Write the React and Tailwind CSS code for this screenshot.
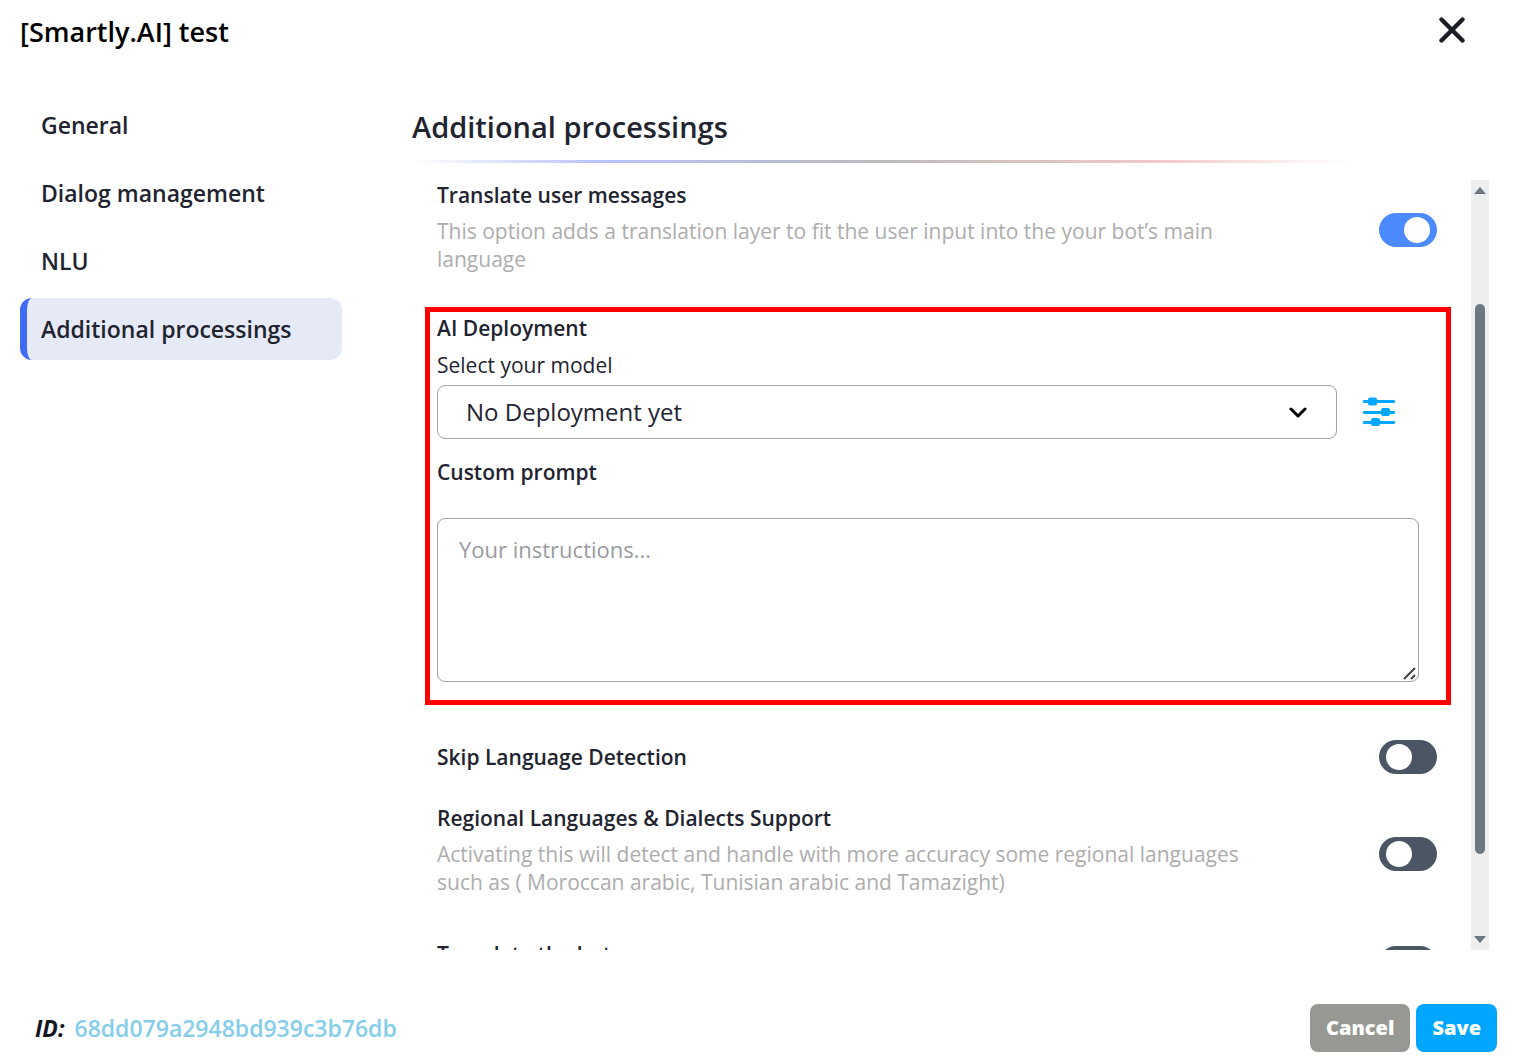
import { useState } from 'react';

const tabs = ['General', 'Dialog management', 'NLU', 'Additional processings'];

function Toggle({ id, checked, onChange, className = '' }) {
  return (
    <input
      id={id}
      type="checkbox"
      checked={checked}
      onChange={(e) => onChange(e.target.checked)}
      className={`flex h-[34px] w-[58px] shrink-0 cursor-pointer appearance-none items-center rounded-full bg-[#4b5563] px-[7px] before:block before:size-[26px] before:rounded-full before:bg-white checked:justify-end checked:bg-[#4b8bff] ${className}`}
    />
  );
}

function OptionRow({ id, title, description, checked, onChange, toggleClass, className = '' }) {
  return (
    <div className={`flex justify-between pr-[14px] pl-3 ${className}`}>
      <div className="max-w-[830px]">
        <label htmlFor={id} className="block text-[21px] leading-7 font-semibold">
          {title}
        </label>
        {description && <p className="mt-2 text-[21px] leading-7 text-[#adadad]">{description}</p>}
      </div>
      <Toggle id={id} checked={checked} onChange={onChange} className={toggleClass} />
    </div>
  );
}

function SlidersIcon() {
  return (
    <svg width="32" height="30" viewBox="0 0 32 30" fill="#00a6ff" aria-hidden="true">
      <rect x="0" y="3" width="32" height="3" rx="1" />
      <rect x="0" y="14" width="32" height="3" rx="1" />
      <rect x="0" y="24" width="32" height="3" rx="1" />
      <rect x="5" y="0.5" width="9" height="8" rx="2" />
      <rect x="18" y="11" width="9" height="8" rx="2" />
      <rect x="8" y="21" width="9" height="8" rx="2" />
    </svg>
  );
}

function ScrollBar() {
  return (
    <div className="flex w-[18px] shrink-0 flex-col items-center bg-[#eeeeee] py-[7px]" aria-hidden="true">
      <svg width="12" height="7" viewBox="0 0 12 7" fill="#6b7880">
        <path d="M6 0 12 7H0Z" />
      </svg>
      <div className="flex w-full flex-1 flex-col items-center">
        <div className="grow-[110]" />
        <div className="w-[10px] grow-[550] rounded-full bg-[#6b7880]" />
        <div className="grow-[82]" />
      </div>
      <svg width="12" height="7" viewBox="0 0 12 7" fill="#6b7880">
        <path d="M6 7 12 0H0Z" />
      </svg>
    </div>
  );
}

export default function App() {
  const [activeTab, setActiveTab] = useState('Additional processings');
  const [options, setOptions] = useState({
    translateUser: true,
    skipDetection: false,
    regional: false,
    translateBot: false,
  });
  const [model, setModel] = useState('none');
  const [prompt, setPrompt] = useState('');

  const setOption = (key) => (value) => setOptions((prev) => ({ ...prev, [key]: value }));

  return (
    <div className="flex h-screen flex-col bg-white font-['Open_Sans',sans-serif] text-[#1f2430]">
      <header className="flex h-[60px] shrink-0 items-center justify-between pr-[50px] pl-5">
        <h1 className="pt-1 text-[27px] leading-8 font-semibold text-black">[Smartly.AI] test</h1>
        <button type="button" aria-label="Close" className="cursor-pointer">
          <svg width="26" height="26" viewBox="0 0 26 26" fill="none" stroke="#1a1d26" strokeWidth="4.4" strokeLinecap="round">
            <path d="M2.5 2.5 23.5 23.5M23.5 2.5 2.5 23.5" />
          </svg>
        </button>
      </header>

      <div className="flex min-h-0 flex-1 pr-[26px] pl-5">
        <nav className="mt-[34px] flex w-[322px] shrink-0 flex-col gap-[6px]">
          {tabs.map((tab) => (
            <button
              key={tab}
              type="button"
              onClick={() => setActiveTab(tab)}
              className={`h-[62px] cursor-pointer rounded-xl border-l-[7px] pl-[14px] text-left text-[23px] leading-8 font-semibold ${
                tab === activeTab ? 'border-[#3f6af5] bg-[#e6eaf6]' : 'border-transparent'
              }`}
            >
              {tab}
            </button>
          ))}
        </nav>

        <main className="ml-[70px] flex min-w-0 flex-1 flex-col">
          <h2 className="mt-[47px] text-[29px] leading-10 font-semibold">Additional processings</h2>
          <div className="mt-[13px] mr-[139px] h-[3px] shrink-0 bg-[linear-gradient(90deg,transparent,#b9c2fa_20%,#bbbbbb_50%,#f3c9c9_80%,transparent)]" />

          <div className="mt-[17px] flex min-h-0 flex-1">
            <div className="min-w-0 flex-1 overflow-hidden pr-5 pl-[13px]">
              <OptionRow
                id="translate-user"
                title="Translate user messages"
                description="This option adds a translation layer to fit the user input into the your bot’s main language"
                checked={options.translateUser}
                onChange={setOption('translateUser')}
                toggleClass="mt-8"
                className="items-start pt-px"
              />

              <section className="mt-[34px] border-[5px] border-[#ff0000] pt-[2px] pr-[27px] pb-[18px] pl-[7px]">
                <h3 className="text-[21px] leading-7 font-semibold">AI Deployment</h3>
                <label htmlFor="model" className="mt-[9px] block text-[21px] leading-7">
                  Select your model
                </label>
                <div className="mt-[6px] flex items-center pr-6">
                  <div className="relative flex-1">
                    <select
                      id="model"
                      value={model}
                      onChange={(e) => setModel(e.target.value)}
                      className="block h-[54px] w-full appearance-none rounded-lg border border-[#a3a3a9] bg-white pl-7 text-[24px]"
                    >
                      <option value="none">No Deployment yet</option>
                    </select>
                    <svg className="pointer-events-none absolute top-[22px] right-[30px]" width="18" height="12" viewBox="0 0 18 12" fill="none" stroke="#000" strokeWidth="3" strokeLinecap="round" strokeLinejoin="round">
                      <path d="m2 2 7 7 7-7" />
                    </svg>
                  </div>
                  <button type="button" aria-label="Model settings" className="ml-[26px] cursor-pointer">
                    <SlidersIcon />
                  </button>
                </div>

                <label htmlFor="prompt" className="mt-[19px] block text-[21px] leading-7 font-semibold">
                  Custom prompt
                </label>
                <div className="relative mt-8">
                  <textarea
                    id="prompt"
                    value={prompt}
                    onChange={(e) => setPrompt(e.target.value)}
                    placeholder="Your instructions..."
                    className="block h-[164px] w-full resize-none rounded-lg border border-[#a3a3a9] px-[21px] py-[14px] text-[22px] leading-8 placeholder:text-[#999b9f]"
                  />
                  <svg className="pointer-events-none absolute right-[3px] bottom-[2px]" width="13" height="13" viewBox="0 0 13 13" fill="none" stroke="#444" strokeWidth="2">
                    <path d="M1 12 12 1M8 12l4-4" />
                  </svg>
                </div>
              </section>

              <OptionRow
                id="skip-detection"
                title="Skip Language Detection"
                checked={options.skipDetection}
                onChange={setOption('skipDetection')}
                className="mt-[35px] items-center"
              />
              <OptionRow
                id="regional"
                title="Regional Languages & Dialects Support"
                description="Activating this will detect and handle with more accuracy some regional languages such as ( Moroccan arabic, Tunisian arabic and Tamazight)"
                checked={options.regional}
                onChange={setOption('regional')}
                toggleClass="mt-[33px]"
                className="mt-[30px] items-start"
              />
              <OptionRow
                id="translate-bot"
                title="Translate the bot"
                checked={options.translateBot}
                onChange={setOption('translateBot')}
                toggleClass="mt-[6px]"
                className="mt-11 items-start"
              />
            </div>
            <ScrollBar />
          </div>
        </main>
      </div>

      <footer className="flex shrink-0 items-center justify-between pt-[54px] pr-[18px] pb-[7px] pl-[35px]">
        <p className="text-[23px] leading-8 font-semibold">
          <span className="mr-[10px] font-bold text-[#14161f] italic">ID:</span>
          <span className="text-[#85cdea]">68dd079a2948bd939c3b76db</span>
        </p>
        <div className="flex gap-[6px]">
          <button type="button" className="h-12 cursor-pointer rounded-lg bg-[#979893] px-4 text-[20px] font-extrabold text-white">
            Cancel
          </button>
          <button type="button" className="h-12 cursor-pointer rounded-lg bg-[#00a6ff] px-4 text-[20px] font-extrabold text-white">
            Save
          </button>
        </div>
      </footer>
    </div>
  );
}
